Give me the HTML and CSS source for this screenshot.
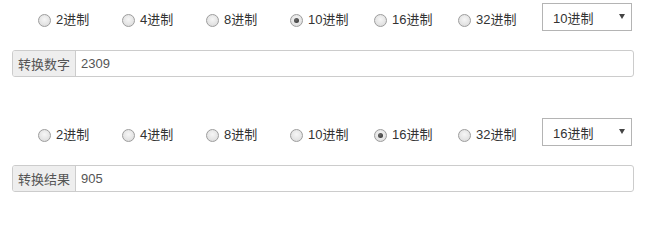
FILE: index.html
```html
<!DOCTYPE html>
<html lang="zh">
<head>
<meta charset="utf-8">
<title>进制转换</title>
<link rel="stylesheet" href="styles.css">
</head>
<body>
<div class="page">
  <section class="block">
    <div class="row">
      <div class="radios">
        <label class="opt"><span class="radio"></span><span class="txt">2进制</span></label>
        <label class="opt"><span class="radio"></span><span class="txt">4进制</span></label>
        <label class="opt"><span class="radio"></span><span class="txt">8进制</span></label>
        <label class="opt"><span class="radio checked"></span><span class="txt">10进制</span></label>
        <label class="opt"><span class="radio"></span><span class="txt">16进制</span></label>
        <label class="opt"><span class="radio"></span><span class="txt">32进制</span></label>
      </div>
      <div class="select"><span class="sel-text">10进制</span><span class="arrow"></span></div>
    </div>
    <div class="group">
      <span class="addon">转换数字</span>
      <span class="field">2309</span>
    </div>
  </section>
  <section class="block second">
    <div class="row">
      <div class="radios">
        <label class="opt"><span class="radio"></span><span class="txt">2进制</span></label>
        <label class="opt"><span class="radio"></span><span class="txt">4进制</span></label>
        <label class="opt"><span class="radio"></span><span class="txt">8进制</span></label>
        <label class="opt"><span class="radio"></span><span class="txt">10进制</span></label>
        <label class="opt"><span class="radio checked"></span><span class="txt">16进制</span></label>
        <label class="opt"><span class="radio"></span><span class="txt">32进制</span></label>
      </div>
      <div class="select"><span class="sel-text">16进制</span><span class="arrow"></span></div>
    </div>
    <div class="group">
      <span class="addon">转换结果</span>
      <span class="field">905</span>
    </div>
  </section>
</div>
</body>
</html>
```

FILE: styles.css
```css
html, body {
  margin: 0;
  padding: 0;
  background: #fff;
}
body {
  font-family: "Liberation Sans", "Noto Sans CJK SC", sans-serif;
  font-size: 13px;
  color: #333;
}
.page {
  padding: 3px 0 0 12px;
}
.block.second {
  margin-top: 41px;
}
.row {
  display: flex;
  align-items: flex-start;
  height: 28px;
}
.radios {
  display: flex;
  margin-left: 26px;
  margin-top: 10px;
}
.opt {
  width: 84px;
  display: flex;
  align-items: center;
  height: 14px;
  line-height: 14px;
}
.radio {
  width: 11px;
  height: 11px;
  border-radius: 50%;
  border: 1px solid #9d9d9d;
  background: radial-gradient(circle at 50% 40%, #f6f6f6 0%, #e4e4e4 60%, #d6d6d6 100%);
  display: flex;
  align-items: center;
  justify-content: center;
  margin-right: 5px;
  flex: none;
}
.radio.checked::after {
  content: "";
  width: 5px;
  height: 5px;
  border-radius: 50%;
  background: radial-gradient(circle at 40% 35%, #6a6a6a, #2f2f2f);
}
.txt {
  color: #333;
  white-space: nowrap;
}
.select {
  position: relative;
  width: 88px;
  height: 26px;
  border: 1px solid #b4b4b4;
  display: flex;
  align-items: center;
  padding-left: 0;
  box-sizing: content-box;
  background: #fff;
}
.sel-text {
  margin-left: 10px;
  color: #333;
}
.arrow {
  position: absolute;
  left: 76px;
  top: 10px;
  width: 0;
  height: 0;
  border-left: 3px solid transparent;
  border-right: 3px solid transparent;
  border-top: 5px solid #444;
}
.group {
  display: flex;
  width: 622px;
  height: 27px;
  margin-top: 19px;
  box-sizing: border-box;
  border: 1px solid #ccc;
  border-radius: 3px;
  overflow: hidden;
}
.addon {
  display: flex;
  align-items: center;
  padding: 0 5px 0 5px;
  background: #eee;
  border-right: 1px solid #ccc;
  color: #555;
}
.field {
  display: flex;
  align-items: center;
  padding-left: 5px;
  color: #555;
  flex: 1;
}
```
